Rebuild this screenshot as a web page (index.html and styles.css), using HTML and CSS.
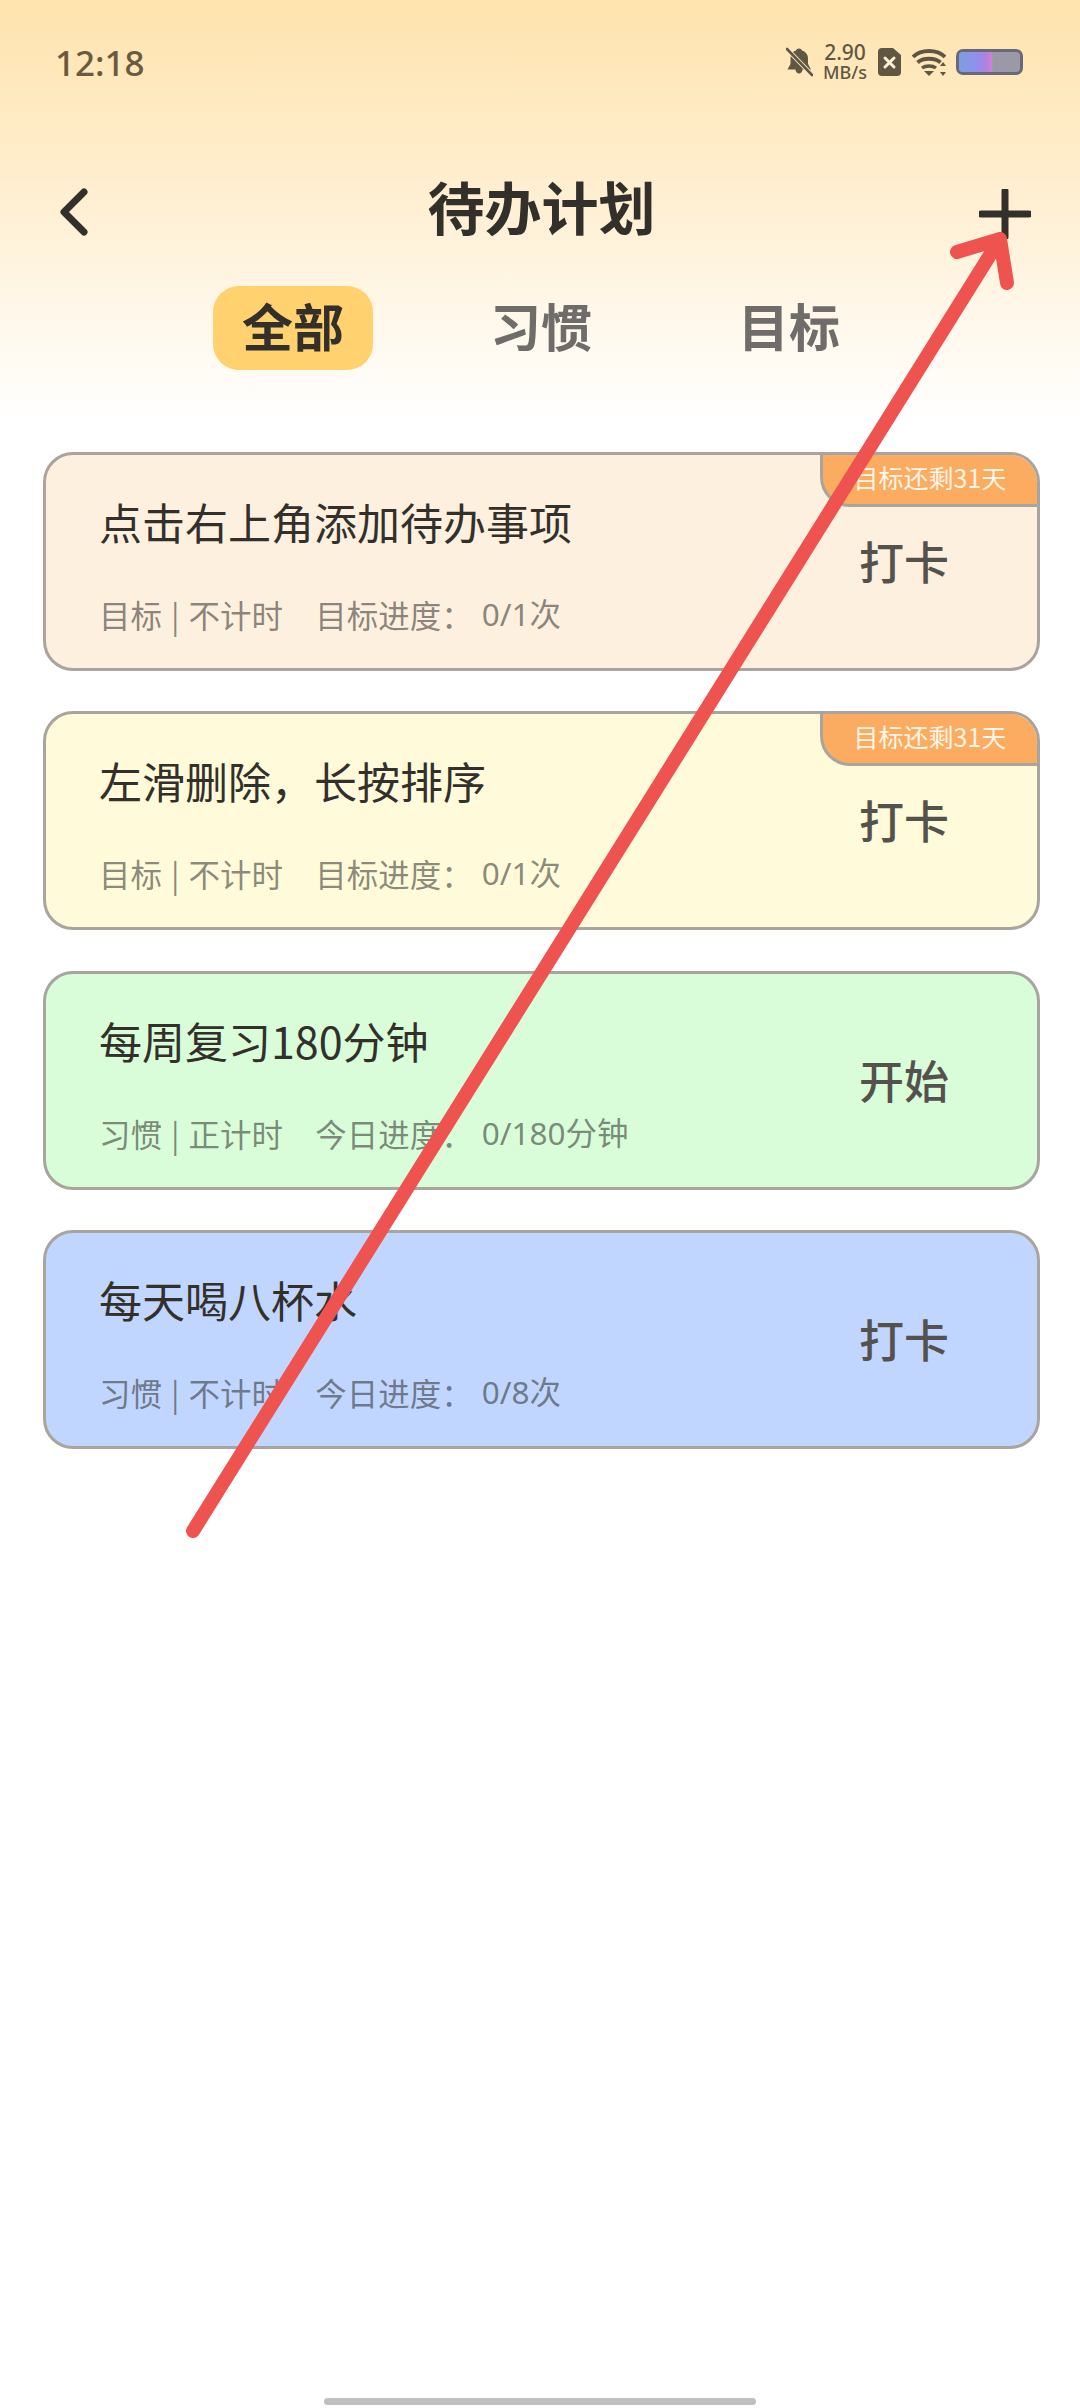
FILE: index.html
```html
<!DOCTYPE html>
<html lang="zh">
<head>
<meta charset="utf-8">
<title>待办计划</title>
<link rel="stylesheet" href="styles.css">
</head>
<body>
<div class="page">
  <div class="status">
    <span class="time">12:18</span>
    <div class="status-icons">
      <svg class="i-bell" viewBox="0 0 27 30"><path d="M13 1.500c1.500 0 2.600.8 3 2 4 1.200 6 4.400 6 8.500v5l3 5.500H16.500c0 2.200-1.500 4-3.500 4s-3.500-1.800-3.500-4H1.500l3-5.500v-6c0-4 2-6.400 5.500-7.500.4-1.200 1.500-2 3-2z" fill="#5f5742"/><path d="M1 2l25 26" stroke="#feeac4" stroke-width="4.500"/><path d="M1 2l25 26" stroke="#5f5742" stroke-width="2.600" stroke-linecap="round"/></svg>
      <div class="speed"><span class="speed-num">2.90</span><span class="speed-unit">MB/s</span></div>
      <svg class="i-sim" viewBox="0 0 23 28"><path d="M4 0h11l8 7v17a4 4 0 0 1-4 4H4a4 4 0 0 1-4-4V4a4 4 0 0 1 4-4z" fill="#5f5742"/><path d="M7 10l9 9M16 10l-9 9" stroke="#fdf0d6" stroke-width="3" stroke-linecap="round"/></svg>
      <svg class="i-wifi" viewBox="0 0 34 28"><g fill="none" stroke="#5f5742"><path d="M1 9C9 1 25 1 33 9" stroke-width="3.800"/><path d="M5.500 14.500c5.500-5 17.500-5 23 0" stroke-width="3.800"/><path d="M10 20c3.500-2.800 10.500-2.800 14 0" stroke-width="3.500"/></g><path d="M12 23h10l-5 5z" fill="#5f5742"/><path d="M31 14l3 4h-6zM31 28l3-4h-6z" fill="#5f5742"/></svg>
      <div class="battery"><div class="battery-fill"></div></div>
    </div>
  </div>
  <header class="header">
    <svg class="i-back" viewBox="0 0 34 50"><path d="M28 5L8 25l20 20" fill="none" stroke="#33302c" stroke-width="7" stroke-linecap="round" stroke-linejoin="round"/></svg>
    <h1 class="title">待办计划</h1>
    <svg class="i-plus" viewBox="0 0 52 50"><path d="M26 2v46M2 25h48" stroke="#33302c" stroke-width="7" stroke-linecap="round"/></svg>
  </header>
  <nav class="tabs">
    <span class="tab tab-active">全部</span>
    <span class="tab">习惯</span>
    <span class="tab">目标</span>
  </nav>
  <main class="list">
    <article class="card card-orange">
      <div class="badge">目标还剩31天</div>
      <div class="card-body">
        <div class="card-title">点击右上角添加待办事项</div>
        <div class="meta"><span class="meta-kind">目标 | 不计时</span><span class="meta-label">目标进度：</span><span class="meta-value">0/1次</span></div>
      </div>
      <div class="action">打卡</div>
    </article>
    <article class="card card-yellow">
      <div class="badge">目标还剩31天</div>
      <div class="card-body">
        <div class="card-title">左滑删除，长按排序</div>
        <div class="meta"><span class="meta-kind">目标 | 不计时</span><span class="meta-label">目标进度：</span><span class="meta-value">0/1次</span></div>
      </div>
      <div class="action">打卡</div>
    </article>
    <article class="card card-green">
      <div class="card-body">
        <div class="card-title">每周复习180分钟</div>
        <div class="meta"><span class="meta-kind">习惯 | 正计时</span><span class="meta-label">今日进度：</span><span class="meta-value">0/180分钟</span></div>
      </div>
      <div class="action">开始</div>
    </article>
    <article class="card card-blue">
      <div class="card-body">
        <div class="card-title">每天喝八杯水</div>
        <div class="meta"><span class="meta-kind">习惯 | 不计时</span><span class="meta-label">今日进度：</span><span class="meta-value">0/8次</span></div>
      </div>
      <div class="action">打卡</div>
    </article>
  </main>
  <div class="home-bar"></div>
  <svg class="arrow" viewBox="0 0 1080 2408"><path d="M193 1531L1000 239M957 252L1000 239L1007 283" fill="none" stroke="#ef5350" stroke-width="14" stroke-linecap="round" stroke-linejoin="round"/></svg>
</div>
</body>
</html>
```

FILE: styles.css
```css
* { box-sizing: border-box; }
html, body { margin: 0; padding: 0; }
body { background: #fff; font-family: "Noto Sans", "Noto Sans CJK SC", sans-serif; }
.page {
  position: relative;
  width: 1080px;
  height: 2408px;
  display: flex;
  flex-direction: column;
  overflow: hidden;
  background: linear-gradient(180deg, #ffe3ae 0, #fff0d4 210px, #ffffff 420px);
}
.status {
  height: 130px;
  padding: 0 57px 6px 55px;
  display: flex;
  align-items: center;
  justify-content: space-between;
  color: #6a5a3e;
}
.time { font-size: 35px; font-weight: 500; }
.status-icons { display: flex; align-items: center; }
.i-bell { width: 27px; height: 30px; }
.speed {
  width: 46px;
  margin-left: 9px;
  display: flex;
  flex-direction: column;
  align-items: center;
  color: #5f5742;
  font-weight: 500;
}
.speed-num { font-size: 21px; line-height: 20px; }
.speed-unit { font-size: 18px; line-height: 20px; white-space: nowrap; }
.i-sim { width: 23px; height: 28px; margin-left: 10px; }
.i-wifi { width: 34px; height: 28px; margin-left: 11px; }
.battery {
  width: 67px;
  height: 26px;
  margin-left: 10px;
  border: 3px solid #68687a;
  border-radius: 7px;
  overflow: hidden;
  background: #9a9aa6;
}
.battery-fill {
  width: 34px;
  height: 100%;
  background: linear-gradient(90deg, #7d9ee0 0, #8f90ee 50%, #b080e0 80%, #cf80d8 95%, #9a9aa6 100%);
}
.header {
  height: 156px;
  padding: 0 49px 0 56px;
  display: flex;
  align-items: center;
  justify-content: space-between;
}
.i-back { width: 34px; height: 50px; margin: 8px 14px 0 0; }
.i-plus { width: 52px; height: 50px; margin-top: 12px; }
.title {
  margin: 0 0 6px;
  font-family: "Noto Sans CJK SC", sans-serif;
  font-size: 57px;
  font-weight: 700;
  line-height: 70px;
  color: #33302c;
}
.tabs {
  height: 84px;
  padding-left: 2px;
  display: flex;
  justify-content: center;
  gap: 88px;
}
.tab {
  width: 160px;
  height: 84px;
  padding-bottom: 6px;
  display: flex;
  align-items: center;
  justify-content: center;
  border-radius: 26px;
  font-family: "Noto Sans CJK SC", sans-serif;
  font-size: 51px;
  font-weight: 700;
  color: #6f6c69;
}
.tab-active { background: #ffd16f; color: #33302c; }
.list {
  margin-top: 82px;
  padding: 0 40px 0 43px;
  display: flex;
  flex-direction: column;
  gap: 40.330px;
}
.card {
  position: relative;
  height: 219px;
  padding: 38px 88px 0 53px;
  display: flex;
  justify-content: space-between;
  border: 3px solid #a9a59e;
  border-radius: 30px;
  overflow: hidden;
}
.card-orange { background: #fdf0de; }
.card-yellow { background: #fffad9; }
.card-green { background: #d9fdd9; }
.card-blue { background: #c1d6fe; }
.card-body { display: flex; flex-direction: column; }
.card-title {
  font-family: "Noto Sans CJK SC", sans-serif;
  font-size: 43px;
  line-height: 56px;
  color: #33302c;
}
.meta {
  margin-top: 47px;
  display: flex;
  font-family: "Noto Sans CJK SC", sans-serif;
  font-size: 31.500px;
  line-height: 36px;
  color: rgba(40, 40, 40, 0.55);
}
.meta-kind { margin-right: 32px; word-spacing: 2px; }
.meta-label { margin-right: 9px; }
.meta-value { font-family: "Noto Sans", "Noto Sans CJK SC", sans-serif; }
.action {
  margin-top: 40px;
  font-family: "Noto Sans CJK SC", sans-serif;
  font-size: 45px;
  font-weight: 500;
  line-height: 56px;
  color: #55524e;
}
.badge {
  position: absolute;
  top: -3px;
  right: -3px;
  width: 220px;
  height: 55px;
  padding-bottom: 5px;
  display: flex;
  align-items: center;
  justify-content: center;
  background: #fbac60;
  border: 3px solid #a9a59e;
  border-radius: 0 30px 0 30px;
  font-family: "Noto Sans CJK SC", sans-serif;
  font-size: 25px;
  color: #fff6e8;
}
.home-bar {
  position: absolute;
  left: 324px;
  top: 2398px;
  width: 432px;
  height: 7px;
  border-radius: 4px;
  background: #c0c0c0;
}
.arrow {
  position: absolute;
  left: 0;
  top: 0;
  width: 1080px;
  height: 2408px;
  pointer-events: none;
}
```
